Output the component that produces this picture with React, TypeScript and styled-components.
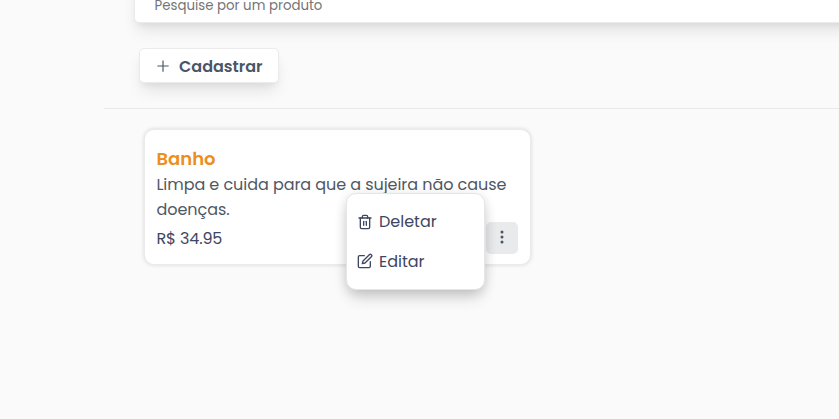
import React from "react";
import styled, { createGlobalStyle } from "styled-components";
import { FiEdit, FiTrash2 } from "react-icons/fi";
import { BsThreeDotsVertical } from "react-icons/bs";
import { AiOutlinePlus } from "react-icons/ai";

const GlobalStyle = createGlobalStyle`
  *, *::before, *::after { box-sizing: border-box; }
  body {
    margin: 0;
    background: #fafafa;
    color: #4a5568;
    font-family: Poppins, Inter, sans-serif;
    font-size: 16px;
    overflow: hidden;
  }
  button { font: inherit; color: inherit; border: 0; cursor: pointer; }
  p, h2 { margin: 0; }
`;

const Page = styled.main`
  height: 419px;
  display: flex;
  flex-direction: column;
  align-items: flex-start;
  overflow: hidden;
`;

const SearchBar = styled.div`
  align-self: stretch;
  height: 41px;
  margin: -18px -20px 0 134px;
  padding: 0 19.5px;
  display: flex;
  flex: none;
  align-items: center;
  background: #fff;
  border: 1px solid #ebebeb;
  border-radius: 5px;
  box-shadow: 0 10px 15px -3px rgba(0, 0, 0, 0.1), 0 4px 6px -2px rgba(0, 0, 0, 0.05);
`;

const SearchInput = styled.input`
  width: 400px;
  padding: 7px 0 0;
  border: 0;
  outline: 0;
  font: 400 13.3333px Poppins, Inter, sans-serif;
  &::placeholder { color: #757575; opacity: 1; }
`;

const CreateButton = styled.button`
  width: 140px;
  height: 35px;
  margin: 25px 0 0 139px;
  padding: 1px 0 0 15px;
  display: flex;
  flex: none;
  align-items: center;
  gap: 8px;
  background: #fff;
  border: 1px solid #ebebeb;
  border-radius: 5px;
  box-shadow: 0 10px 15px -3px rgba(0, 0, 0, 0.1), 0 4px 6px -2px rgba(0, 0, 0, 0.05);
  font-weight: 600;
  font-size: 16px;
`;

const Divider = styled.hr`
  align-self: stretch;
  flex: none;
  height: 1px;
  margin: 25px 0 20px 104px;
  border: 0;
  background: #e9e9e9;
`;

const Card = styled.article`
  position: relative;
  width: 387px;
  height: 136px;
  margin-left: 144px;
  padding: 16px 12px 10px 11.5px;
  display: flex;
  flex-direction: column;
  background: #fff;
  border: 1px solid #ebebeb;
  border-radius: 10px;
  box-shadow: 0 0 4px rgba(0, 0, 0, 0.14);
`;

const Title = styled.h2`
  color: #ed8f1c;
  font-size: 18px;
  font-weight: 600;
  line-height: 25px;
  margin-bottom: 1px;
`;

const Description = styled.p`
  line-height: 25px;
  color: #4f5864;
  white-space: pre-line;
  letter-spacing: -0.06px;
`;

const Footer = styled.div`
  display: flex;
  align-items: flex-start;
  justify-content: space-between;
  height: 32px;
`;

const Price = styled.span`
  line-height: 34px;
  color: #3e4661;
  letter-spacing: -0.15px;
`;

const MoreButton = styled.button`
  width: 32px;
  height: 32px;
  padding: 0 0 2px;
  display: grid;
  place-items: center;
  background: #e9eaeb;
  border-radius: 5px;
`;

const Menu = styled.div`
  position: absolute;
  top: 63px;
  right: 45px;
  width: 139px;
  height: 97px;
  padding: 8px 0;
  display: flex;
  flex-direction: column;
  background: #fff;
  border: 1px solid #e6e6e8;
  border-radius: 10px;
  box-shadow: 0 10px 15px -3px rgba(0, 0, 0, 0.16), 0 2px 12px rgba(0, 0, 0, 0.13);
`;

const MenuItem = styled.button`
  height: 40px;
  padding: 0 10px;
  display: flex;
  align-items: center;
  gap: 6px;
  background: transparent;
  color: #3d4663;
`;

export default function App() {
  return (
    <>
      <GlobalStyle />
      <Page>
        <SearchBar>
          <SearchInput placeholder="Pesquise por um produto" />
        </SearchBar>
        <CreateButton>
          <AiOutlinePlus size={16} />
          Cadastrar
        </CreateButton>
        <Divider />
        <Card>
          <Title>Banho</Title>
          <Description>{"Limpa e cuida para que a sujeira não cause\ndoenças."}</Description>
          <Footer>
            <Price>R$ 34.95</Price>
            <MoreButton aria-label="Mais opções">
              <BsThreeDotsVertical size={16} />
            </MoreButton>
          </Footer>
          <Menu>
            <MenuItem>
              <FiTrash2 size={16} />
              Deletar
            </MenuItem>
            <MenuItem>
              <FiEdit size={16} />
              Editar
            </MenuItem>
          </Menu>
        </Card>
      </Page>
    </>
  );
}
